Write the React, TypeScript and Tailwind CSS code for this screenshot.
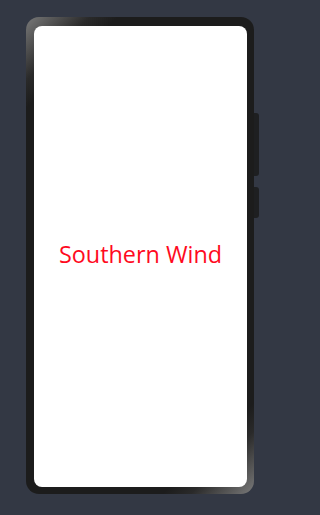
import React from "react";

export default function App() {
  return (
    <div className="w-full min-w-[273px] h-[515px] bg-[#333844] pl-[26px] pt-[17px] overflow-hidden">
      <div className="relative w-[228px] h-[477px]">
        <div className="absolute left-[227px] top-[96px] w-[6px] h-[63px] rounded-r-[3px] bg-[#1e1f21]" />
        <div className="absolute left-[227px] top-[170px] w-[6px] h-[31px] rounded-r-[3px] bg-[#1e1f21]" />
        <div className="relative w-full h-full rounded-[13px] p-[8px] pt-[9px] pr-[7px] pb-[7px] bg-[linear-gradient(135deg,#7a7a7a_0%,#2a2a2a_9%,#1c1c1c_13%,#1c1c1c_87%,#2a2a2a_91%,#7a7a7a_100%)]">
          <div className="w-full h-full rounded-[8px] bg-white flex items-center justify-center">
            <span className="mb-[4px] text-[23.4px] leading-none text-[#ff0a1e] [font-family:'Open_Sans',sans-serif]">
              Southern Wind
            </span>
          </div>
        </div>
      </div>
    </div>
  );
}
